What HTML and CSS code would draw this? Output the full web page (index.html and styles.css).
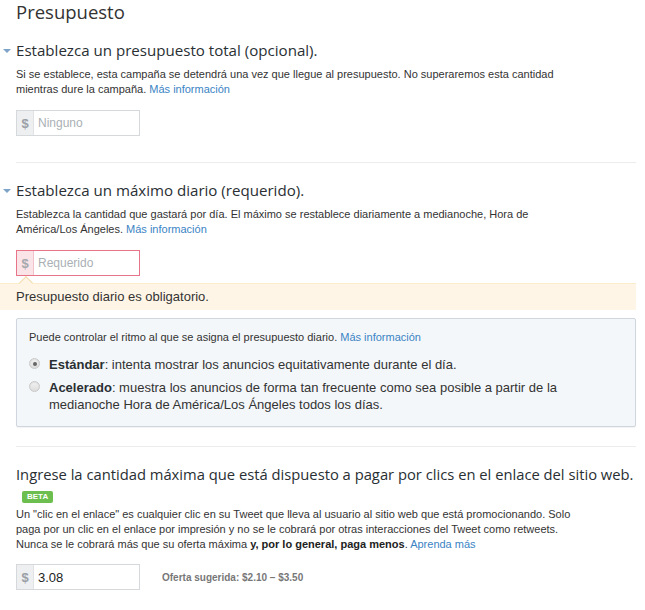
FILE: index.html
```html
<!DOCTYPE html>
<html>
<head>
<meta charset="utf-8">
<link rel="stylesheet" href="styles.css">
</head>
<body>
<div class="page">
  <h1 class="title">Presupuesto</h1>

  <section class="section">
    <h2 class="heading"><span class="caret"></span>Establezca un presupuesto total (opcional).</h2>
    <p class="desc">Si se establece, esta campaña se detendrá una vez que llegue al presupuesto. No superaremos esta cantidad mientras dure la campaña. <a class="link">Más información</a></p>
    <div class="field">
      <span class="prefix">$</span>
      <span class="value placeholder">Ninguno</span>
    </div>
  </section>

  <hr class="sep">

  <section class="section second">
    <h2 class="heading"><span class="caret"></span>Establezca un máximo diario (requerido).</h2>
    <p class="desc">Establezca la cantidad que gastará por día. El máximo se restablece diariamente a medianoche, Hora de América/Los Ángeles. <a class="link">Más información</a></p>
    <div class="field error">
      <span class="prefix">$</span>
      <span class="value placeholder">Requerido</span>
    </div>
  </section>

  <div class="alert">
    <span class="alert-arrow"></span>
    Presupuesto diario es obligatorio.
  </div>

  <div class="pacing">
    <p class="pacing-intro">Puede controlar el ritmo al que se asigna el presupuesto diario. <a class="link">Más información</a></p>
    <div class="option">
      <span class="radio checked"></span>
      <span class="option-text"><b>Estándar</b>: intenta mostrar los anuncios equitativamente durante el día.</span>
    </div>
    <div class="option">
      <span class="radio"></span>
      <span class="option-text"><b>Acelerado</b>: muestra los anuncios de forma tan frecuente como sea posible a partir de la medianoche Hora de América/Los Ángeles todos los días.</span>
    </div>
  </div>

  <hr class="sep sep2">

  <section class="section third">
    <h2 class="heading big">Ingrese la cantidad máxima que está dispuesto a pagar por clics en el enlace del sitio web.</h2>
    <span class="beta">BETA</span>
    <p class="desc">Un "clic en el enlace" es cualquier clic en su Tweet que lleva al usuario al sitio web que está promocionando. Solo paga por un clic en el enlace por impresión y no se le cobrará por otras interacciones del Tweet como retweets. Nunca se le cobrará más que su oferta máxima <b>y, por lo general, paga menos</b>. <a class="link">Aprenda más</a></p>
    <div class="bid-row">
      <div class="field">
        <span class="prefix">$</span>
        <span class="value">3.08</span>
      </div>
      <span class="suggest">Oferta sugerida: $2.10 – $3.50</span>
    </div>
  </section>
</div>
</body>
</html>
```

FILE: styles.css
```css
* { box-sizing: border-box; }
html, body { margin: 0; padding: 0; background: #fff; }
body {
  font-family: "Liberation Sans", Arial, sans-serif;
  color: #333;
  width: 645px;
  overflow: hidden;
}
.page { padding: 0 9px 0 16px; }

.title {
  font-family: "Open Sans", "Liberation Sans", sans-serif;
  font-weight: 400;
  font-size: 18.5px;
  color: #333;
  margin: 0;
  padding-top: 0;
  line-height: 24px;
}

.section { margin-top: 16px; }
.heading {
  position: relative;
  font-family: "Open Sans", "Liberation Sans", sans-serif;
  font-weight: 400;
  font-size: 15.1px;
  line-height: 20px;
  color: #292f33;
  margin: 0 0 7px 0;
}
.caret {
  position: absolute;
  left: -13px;
  top: 9px;
  width: 0; height: 0;
  border-left: 4px solid transparent;
  border-right: 4px solid transparent;
  border-top: 4px solid #7ea3c8;
}
.desc {
  font-size: 11px;
  line-height: 15px;
  margin: 0 0 13px 0;
  color: #333;
  max-width: 552px;
}
.link { color: #3a84c4; }

.field {
  display: flex;
  width: 124px;
  height: 26px;
  border: 1px solid #d5d9dc;
  background: #fff;
}
.prefix {
  width: 17px;
  background: #eeeff1;
  border-right: 1px solid #e0e2e4;
  color: #9aa0a6;
  font-weight: 700;
  font-size: 13px;
  display: flex;
  align-items: center;
  justify-content: center;
}
.value {
  padding-left: 4px;
  font-size: 13px;
  display: flex;
  align-items: center;
  color: #222;
}
.placeholder { color: #aab0b5; font-size: 12px; }

.field.error { border-color: #e8748a; }
.field.error .prefix { background: #fbe4e8; border-right-color: #f3c3cc; color: #a5a9ad; }

.sep {
  border: 0;
  border-top: 1px solid #ececec;
  margin: 26px 0 0 0;
}
.second { margin-top: 17px; }

.alert {
  position: relative;
  background: #fef5e6;
  border-top: 1px solid #fbeccb;
  margin: 7px 0 0 -16px;
  padding: 5px 16px 6px;
  font-size: 13px;
  line-height: 15px;
  color: #333;
}
.alert-arrow {
  position: absolute;
  left: 21px;
  top: -6px;
  width: 10px; height: 10px;
  background: #fef5e6;
  border-left: 1px solid #f3ddb0;
  border-top: 1px solid #f3ddb0;
  transform: rotate(45deg);
}

.pacing {
  margin-top: 8px;
  background: #f4f7fa;
  border: 1px solid #cfd6dd;
  border-radius: 2px;
  padding: 11px 12px 13px 12px;
  box-shadow: 0 1px 1px rgba(0,0,0,0.05);
}
.pacing-intro {
  font-size: 11px;
  line-height: 14px;
  margin: 0 0 12px 0;
}
.option {
  display: flex;
  align-items: flex-start;
  gap: 9px;
  margin-bottom: 6px;
  font-size: 13px;
  line-height: 17px;
}
.option:last-child { margin-bottom: 0; }
.option-text { flex: 1; max-width: 520px; }
.option b { font-weight: 700; color: #292f33; }
.radio {
  flex: none;
  width: 11px; height: 11px;
  border-radius: 50%;
  margin-top: 2px;
  background: linear-gradient(#f3f3f3, #dcdcdc);
  border: 1px solid #c9c9c9;
  box-shadow: inset 0 1px 1px rgba(0,0,0,0.08);
  position: relative;
}
.radio.checked::after {
  content: "";
  position: absolute;
  left: 2.5px; top: 2.5px;
  width: 4px; height: 4px;
  border-radius: 50%;
  background: #666;
}

.sep2 { margin-top: 19px; }
.third { margin-top: 17px; }
.heading.big {
  font-size: 14.75px;
  white-space: nowrap;
  margin-bottom: 1px;
}
.beta {
  display: inline-block;
  margin-left: 6px;
  background: #6cbf4e;
  color: #fff;
  font-size: 8px;
  font-weight: 700;
  line-height: 12px;
  padding: 0 5px;
  border-radius: 2px;
}
.third .desc { margin-top: 4px; margin-bottom: 12px; max-width: 562px; }
.third .desc b { color: #222; }
.bid-row {
  display: flex;
  align-items: center;
  gap: 22px;
}
.suggest {
  font-size: 10px;
  font-weight: 700;
  color: #777;
}
```
